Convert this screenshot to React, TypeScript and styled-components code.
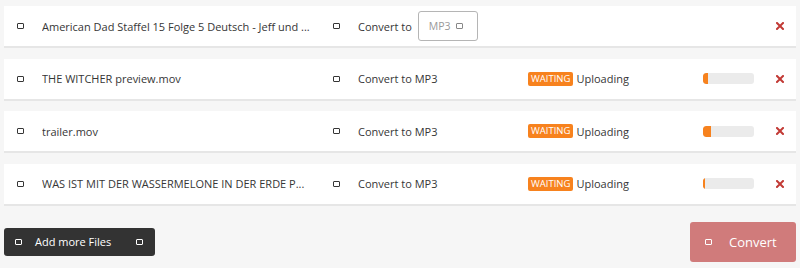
import React from 'react';
import styled, { createGlobalStyle } from 'styled-components';

const GlobalStyle = createGlobalStyle`
  html, body {
    margin: 0;
    padding: 0;
    background: #f6f6f6;
  }
  body {
    font-family: "Open Sans", "Liberation Sans", Arial, sans-serif;
    color: #363636;
  }
`;

const Page = styled.div`
  padding: 6px 4px 0 4px;
  width: 792px;
`;

const FileList = styled.div`
  display: flex;
  flex-direction: column;
  gap: 10.5px;
`;

const Row = styled.div`
  display: grid;
  grid-template-columns: 25px 291px 25px 170px 175px 73px 20px;
  align-items: center;
  height: 40px;
  padding-left: 13px;
  background: #fff;
  border-bottom: 2px solid #e6e6e6;
  font-size: 11px;
`;

// missing-glyph box used by the icon font
const Glyph = styled.span<{ $light?: boolean }>`
  display: inline-block;
  width: 5px;
  height: 4px;
  border: 1.5px solid ${p => (p.$light ? '#fff' : '#363636')};
  border-radius: 1px;
`;

const Name = styled.span`
  white-space: nowrap;
  overflow: hidden;
`;

const ConvertCell = styled.div`
  display: flex;
  align-items: center;
  gap: 6px;
`;

const Select = styled.div`
  display: flex;
  align-items: center;
  gap: 5px;
  box-sizing: border-box;
  width: 60px;
  height: 30px;
  padding-left: 10px;
  border: 1px solid #b5b5b5;
  border-radius: 3px;
  color: #999;
  font-size: 10.5px;
`;

const SelectGlyph = styled(Glyph)`
  border-color: #888;
  border-width: 1px;
  width: 5px;
  height: 4px;
`;

const Status = styled.div`
  display: flex;
  align-items: center;
  gap: 3px;
`;

const Badge = styled.span`
  background: #f7821e;
  color: #fff;
  font-size: 9.5px;
  line-height: 14px;
  padding: 0 3px;
  border-radius: 2px;
`;

const Track = styled.div`
  width: 51px;
  height: 11px;
  border-radius: 3px;
  background: #ebebeb;
  overflow: hidden;
`;

const Fill = styled.div`
  height: 100%;
  background: #f7821e;
  border-radius: 3px 0 0 3px;
`;

const Remove = styled.svg`
  width: 8px;
  height: 8px;
`;

const Footer = styled.div`
  display: flex;
  justify-content: space-between;
  align-items: center;
  margin-top: 16px;
`;

const AddButton = styled.button`
  display: flex;
  align-items: center;
  width: 151px;
  height: 28px;
  padding: 0 12px 0 11px;
  border: none;
  border-radius: 3px;
  background: #333333;
  color: #fff;
  font-family: inherit;
  font-size: 11px;
`;

const AddLabel = styled.span`
  flex: 1;
  text-align: left;
  padding-left: 13px;
`;

const ConvertButton = styled.button`
  display: flex;
  align-items: center;
  gap: 17px;
  width: 106px;
  height: 40px;
  padding-left: 15px;
  border: none;
  border-radius: 3px;
  background: #d07b7b;
  color: #fff;
  font-family: inherit;
  font-size: 13px;
`;

const RemoveIcon = () => (
  <Remove viewBox="0 0 8 8">
    <path d="M1 1 L7 7 M7 1 L1 7" stroke="#c23a35" strokeWidth="2" strokeLinecap="square" />
  </Remove>
);

interface FileItem {
  name: string;
  progress?: number;
}

const files: FileItem[] = [
  { name: 'American Dad Staffel 15 Folge 5 Deutsch - Jeff und ...' },
  { name: 'THE WITCHER preview.mov', progress: 10 },
  { name: 'trailer.mov', progress: 16 },
  { name: 'WAS IST MIT DER WASSERMELONE IN DER ERDE P...', progress: 4 },
];

export default function App() {
  return (
    <Page>
      <GlobalStyle />
      <FileList>
        {files.map(f => (
          <Row key={f.name}>
            <Glyph />
            <Name>{f.name}</Name>
            <Glyph />
            {f.progress === undefined ? (
              <ConvertCell>
                Convert to
                <Select>
                  MP3 <SelectGlyph />
                </Select>
              </ConvertCell>
            ) : (
              <span>Convert to MP3</span>
            )}
            {f.progress === undefined ? (
              <span />
            ) : (
              <Status>
                <Badge>WAITING</Badge>
                Uploading
              </Status>
            )}
            {f.progress === undefined ? (
              <span />
            ) : (
              <Track>
                <Fill style={{ width: `${f.progress}%` }} />
              </Track>
            )}
            <RemoveIcon />
          </Row>
        ))}
      </FileList>
      <Footer>
        <AddButton>
          <Glyph $light />
          <AddLabel>Add more Files</AddLabel>
          <Glyph $light />
        </AddButton>
        <ConvertButton>
          <Glyph $light />
          Convert
        </ConvertButton>
      </Footer>
    </Page>
  );
}
